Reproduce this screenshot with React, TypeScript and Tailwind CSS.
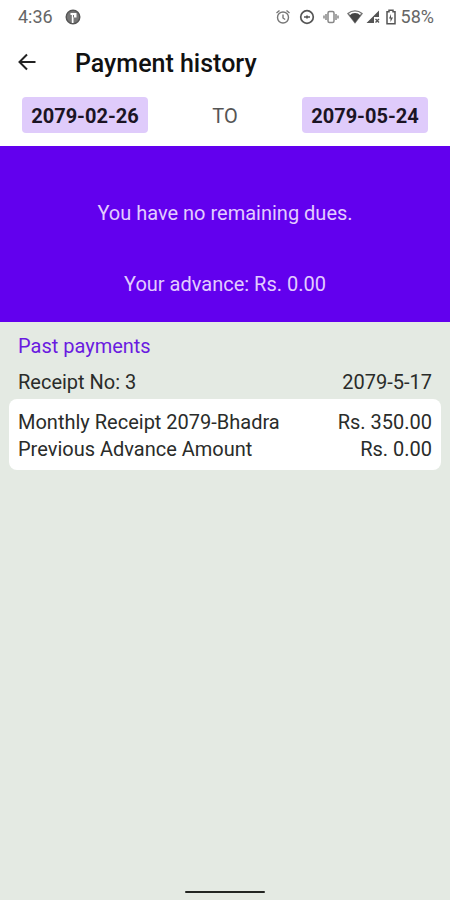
import { ReactNode } from "react";

const payments = [
  {
    receiptNo: 3,
    date: "2079-5-17",
    items: [
      { name: "Monthly Receipt 2079-Bhadra", amount: "Rs. 350.00" },
      { name: "Previous Advance Amount", amount: "Rs. 0.00" },
    ],
  },
];

const StatusBar = () => (
  <div className="h-[30px] pt-1 pl-[18px] pr-4 flex items-center justify-between text-[#666] text-lg">
    <div className="flex items-center gap-3">
      <span>4:36</span>
      <svg width="16" height="16" viewBox="0 0 16 16" aria-hidden="true">
        <circle cx="8" cy="8" r="6.800" fill="#777" stroke="#555" strokeWidth="1.400" />
        <path d="M5.500 4h6v4.500h-3V14H6.800V6H5.500z" fill="#fff" />
        <path d="M8.500 6v2.500" stroke="#777" strokeWidth="1" />
      </svg>
    </div>
    <div className="flex items-center">
      <svg className="mr-2" width="16" height="16" viewBox="0 0 16 16" fill="none" stroke="#777" strokeWidth="1.400" aria-hidden="true">
        <circle cx="8" cy="8.500" r="5.500" />
        <path d="M8 5.500V9l2.200 1.500M1.500 4l3-2.500M14.500 4l-3-2.500" />
      </svg>
      <svg className="mr-2" width="16" height="16" viewBox="0 0 16 16" fill="none" stroke="#555" strokeWidth="1.700" aria-hidden="true">
        <circle cx="8" cy="8" r="6.300" />
        <path d="M5 8h6M8 6.500v3" />
      </svg>
      <svg className="mr-2" width="16" height="16" viewBox="0 0 16 16" fill="none" stroke="#888" strokeWidth="1.500" aria-hidden="true">
        <rect x="5" y="2.500" width="6" height="11" rx="1.500" />
        <path d="M3 5v6M1 6.500v3M13 5v6M15 6.500v3" />
      </svg>
      <svg className="mr-0.5" width="16" height="16" viewBox="0 0 16 16" aria-hidden="true">
        <path d="M1 4.500a10.500 10.500 0 0 1 14 0L8 13.500z" fill="#fff" stroke="#777" strokeWidth="1.400" />
        <path d="M2.500 6.500a7.500 7.500 0 0 1 11 0L8 13.800z" fill="#444" />
      </svg>
      <svg className="mr-1" width="16" height="16" viewBox="0 0 16 16" aria-hidden="true">
        <path d="M14 1.500V8H9v6H1.500z" fill="#555" />
        <path d="M10.500 10l3.500 3.500M14 10l-3.500 3.500" stroke="#555" strokeWidth="1.400" />
      </svg>
      <svg className="mr-1" width="12" height="16" viewBox="0 0 12 16" fill="none" stroke="#555" strokeWidth="1.500" aria-hidden="true">
        <path d="M4 2.700V1.200h4v1.500h2v12H2v-12z" />
        <path d="M6 5l-2 4.500h1.500V13L8 8.500H6z" fill="#555" stroke="none" />
      </svg>
      <span>58%</span>
    </div>
  </div>
);

const DateButton = ({ children }: { children: ReactNode }) => (
  <button
    type="button"
    className="w-[126px] h-9 pt-0.5 rounded bg-[#dfcbfb] text-[#1b1424] text-xl font-bold"
  >
    {children}
  </button>
);

export default function App() {
  return (
    <div className="min-h-screen flex flex-col bg-[#e4eae3] font-['Roboto',sans-serif] text-xl text-[#2a2c2a]">
      <header className="bg-white">
        <StatusBar />
        <div className="h-[66px] px-4 flex items-center gap-[37px]">
          <button type="button" aria-label="Back">
            <svg width="22" height="22" viewBox="0 0 22 22" fill="none" stroke="#222" strokeWidth="2" aria-hidden="true">
              <path d="M19.500 10H4M11 2.500L3.500 10l7.500 7.500" />
            </svg>
          </button>
          <h1 className="text-[25px] font-medium text-[#111]">Payment history</h1>
        </div>
        <div className="px-[22px] pt-px pb-[13px] flex items-center justify-between">
          <DateButton>2079-02-26</DateButton>
          <span className="pt-0.5 text-[#555]">TO</span>
          <DateButton>2079-05-24</DateButton>
        </div>
      </header>

      <section className="h-44 pt-[53px] bg-[#6200ee] text-[#e2ccff] text-center">
        <p className="leading-7">You have no remaining dues.</p>
        <p className="mt-[43px] leading-7">Your advance: Rs. 0.00</p>
      </section>

      <main className="flex-1 px-[9px] pt-2">
        <h2 className="px-[9px] leading-8 text-[#6a1be0]">Past payments</h2>
        {payments.map((payment) => (
          <section key={payment.receiptNo} className="pt-1">
            <div className="px-[9px] flex justify-between leading-8">
              <span>Receipt No: {payment.receiptNo}</span>
              <span>{payment.date}</span>
            </div>
            <ul className="mt-px pt-2.5 pb-[7px] px-[9px] bg-white rounded-lg">
              {payment.items.map((item) => (
                <li key={item.name} className="flex justify-between leading-[27px]">
                  <span>{item.name}</span>
                  <span>{item.amount}</span>
                </li>
              ))}
            </ul>
          </section>
        ))}
      </main>

      <footer className="pb-[7px] flex justify-center">
        <div className="w-20 h-0.5 rounded-full bg-[#222522]" />
      </footer>
    </div>
  );
}
